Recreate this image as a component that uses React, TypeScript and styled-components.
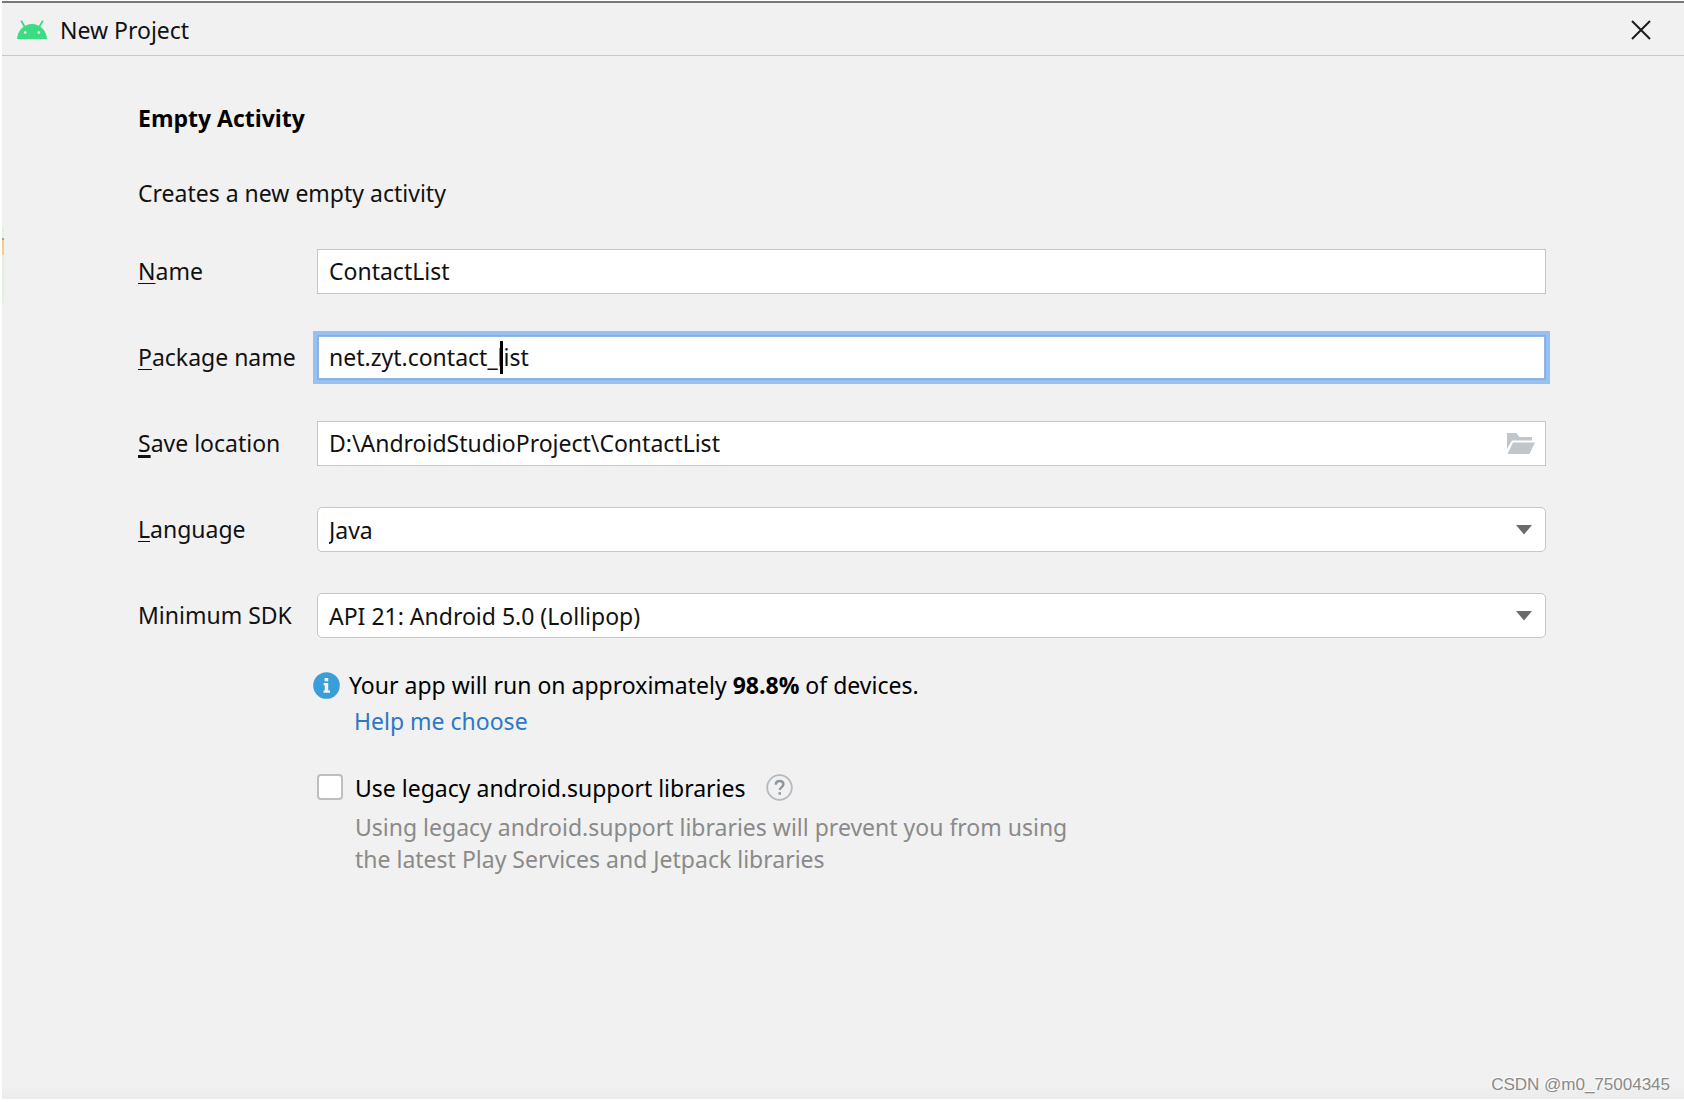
import React, { useState } from "react";
import styled, { createGlobalStyle } from "styled-components";

const GlobalStyle = createGlobalStyle`
  *, *::before, *::after { box-sizing: border-box; }
  body { margin: 0; background: #fff; }
  body, input, select, button {
    font-family: "Noto Sans", "Open Sans", sans-serif;
    font-size: 23px;
    line-height: 32px;
    color: #111;
  }
`;

const Dialog = styled.div`
  position: relative;
  display: flex;
  flex-direction: column;
  min-height: calc(100vh - 4px);
  margin: 1px 0 3px 2px;
  border-top: 2px solid #787878;
  background: linear-gradient(to top, #ebebeb, #f1f1f1 14px);
`;

const TitleBar = styled.header`
  display: flex;
  align-items: center;
  gap: 12px;
  height: 53px;
  padding: 1px 29px 0 14px;
  border-bottom: 1px solid #c8c8c8;
`;

const Title = styled.h1`
  flex: 1;
  margin: 0;
  font-size: 23px;
  font-weight: 400;
`;

const CloseButton = styled.button`
  display: flex;
  padding: 4px;
  border: 0;
  background: none;
`;

const Content = styled.main`
  display: flex;
  flex-direction: column;
  padding: 46px 138px 80px 136px;
`;

const Heading = styled.h2`
  margin: 0;
  font-family: "Open Sans", sans-serif;
  font-size: 23px;
  font-weight: 700;
  color: #000;
`;

const Description = styled.p`
  margin: 43px 0 0;
`;

const Form = styled.form`
  display: grid;
  grid-template-columns: 179px 1fr;
  row-gap: 41px;
  align-items: center;
  margin-top: 40px;
`;

const Label = styled.label`
  padding-bottom: 2px;
  white-space: nowrap;
`;

const Mnemonic = styled.span<{ $strong?: boolean }>`
  text-decoration: underline;
  text-decoration-thickness: ${(p) => (p.$strong ? 3 : 1)}px;
  text-underline-offset: 3px;
`;

const Field = styled.div<{ $focused?: boolean; $rounded?: boolean }>`
  position: relative;
  display: flex;
  align-items: center;
  height: 45px;
  border: 1px solid ${(p) => (p.$focused ? "#87afda" : "#c6c6c6")};
  border-radius: ${(p) => (p.$rounded ? 5 : 0)}px;
  background: #fff;
  box-shadow: ${(p) => (p.$focused ? "inset 0 0 0 1px #8fb8e8, 0 0 0 4px #97c1f0" : "none")};
`;

const TextInput = styled.input`
  flex: 1;
  min-width: 0;
  height: 100%;
  padding: 0 0 2px 11px;
  border: 0;
  outline: 0;
  background: none;
`;

const Caret = styled.span`
  position: absolute;
  top: 5px;
  left: 182px;
  width: 3px;
  height: 33px;
  background: #000;
`;

const BrowseButton = styled.button`
  display: flex;
  padding: 0 10px;
  border: 0;
  background: none;
`;

const Select = styled.select`
  flex: 1;
  height: 100%;
  padding: 0 40px 0 11px;
  border: 0;
  outline: 0;
  background: none;
  appearance: none;
`;

const ArrowIcon = styled.svg`
  position: absolute;
  right: 13px;
  pointer-events: none;
`;

const Notes = styled.section`
  display: flex;
  flex-direction: column;
  margin: 31px 0 0 175px;
`;

const InfoRow = styled.div`
  display: flex;
  align-items: center;
  gap: 9px;
  color: #000;
`;

const Percent = styled.b`
  font-family: "Open Sans", sans-serif;
`;

const HelpLink = styled.a`
  align-self: flex-start;
  margin: 4px 0 0 41px;
  color: #2c78c4;
  text-decoration: none;
`;

const LegacyRow = styled.div`
  display: flex;
  align-items: flex-start;
  margin: 35px 0 0 4px;
  color: #000;
`;

const CheckBox = styled.input`
  width: 26px;
  height: 26px;
  margin: 2px 12px 0 0;
  border: 2px solid #bebebe;
  border-radius: 4px;
  background: #fff;
  appearance: none;
  &:checked { background: #3a9fd9; }
`;

const HelpButton = styled.button`
  display: flex;
  margin: 2px 0 0 20px;
  padding: 0;
  border: 0;
  background: none;
`;

const Hint = styled.p`
  margin: 7px 0 0 42px;
  color: #8a8a8a;
`;

const EdgeStrip = styled.div`
  position: absolute;
  top: 225px;
  left: 0;
  width: 2px;
  height: 75px;
  background: linear-gradient(#e3f2dc 10px, #9aa58f 10px 12px, #f3cf85 12px 27px, #e0f2dc 27px);
`;

const Watermark = styled.footer`
  position: absolute;
  right: 14px;
  bottom: 4px;
  font-family: "Liberation Sans", sans-serif;
  font-size: 17px;
  line-height: 20px;
  color: #8a8a8a;
  text-shadow: -1px -1px 0 #fff;
`;

const AndroidLogo = () => (
  <svg width="32" height="20" viewBox="0 0 32 20" aria-hidden="true">
    <path d="M5.500 1.200 8.200 6M26.500 1.200 23.800 6" stroke="#3ddc84" strokeWidth="1.800" strokeLinecap="round" />
    <path d="M1 19C1.600 10.500 8 4 16 4s14.400 6.500 15 15Z" fill="#3ddc84" />
    <circle cx="9.200" cy="12.500" r="1.300" fill="#f1f1f1" />
    <circle cx="22.800" cy="12.500" r="1.300" fill="#f1f1f1" />
  </svg>
);

const CloseIcon = () => (
  <svg width="20" height="20" viewBox="0 0 20 20" aria-hidden="true">
    <path d="m1 1 18 18M19 1 1 19" stroke="#1c1c1c" strokeWidth="2" />
  </svg>
);

const FolderIcon = () => (
  <svg width="28" height="22" viewBox="0 0 28 22" aria-hidden="true">
    <path d="M0 0h9.500l2.500 4h13v3.500H5L0 16Z" fill="#c0c6ca" />
    <path d="M6 9.500h22L22.500 21H.5Z" fill="#c0c6ca" />
  </svg>
);

const Arrow = () => (
  <ArrowIcon width="16" height="10" viewBox="0 0 16 10" aria-hidden="true">
    <path d="M0 0h16L8 9.500Z" fill="#6b6b6b" />
  </ArrowIcon>
);

const InfoIcon = () => (
  <svg width="27" height="27" viewBox="0 0 27 27" aria-hidden="true">
    <circle cx="13.500" cy="13.500" r="13.300" fill="#3a9fd9" />
    <path d="M11.600 6h3.600v3.200h-3.600ZM10.600 11h4.600v7.500H17v2.200h-6.500v-2.200h1.300V13.200h-1.200Z" fill="#f4f4f4" />
  </svg>
);

const QuestionIcon = () => (
  <svg width="27" height="27" viewBox="0 0 27 27" aria-hidden="true">
    <circle cx="13.500" cy="13.500" r="12.300" fill="none" stroke="#b4babf" strokeWidth="1.800" />
    <path d="M9.800 10.700C9.800 8.400 11.400 7 13.600 7s3.800 1.300 3.800 3.300c0 2.700-3.600 2.900-3.600 5.700" fill="none" stroke="#8f979d" strokeWidth="2.400" />
    <path d="M12.500 18.200H15v2.500h-2.500Z" fill="#8f979d" />
  </svg>
);

export default function App() {
  const [name, setName] = useState("ContactList");
  const [pkg, setPkg] = useState("net.zyt.contact_list");
  const [location, setLocation] = useState("D:\\AndroidStudioProject\\ContactList");

  return (
    <>
      <GlobalStyle />
      <Dialog>
        <TitleBar>
          <AndroidLogo />
          <Title>New Project</Title>
          <CloseButton type="button" aria-label="Close"><CloseIcon /></CloseButton>
        </TitleBar>
        <Content>
          <Heading>Empty Activity</Heading>
          <Description>Creates a new empty activity</Description>
          <Form>
            <Label htmlFor="name"><Mnemonic>N</Mnemonic>ame</Label>
            <Field>
              <TextInput id="name" value={name} onChange={(e) => setName(e.target.value)} />
            </Field>
            <Label htmlFor="package"><Mnemonic>P</Mnemonic>ackage name</Label>
            <Field $focused>
              <TextInput id="package" value={pkg} onChange={(e) => setPkg(e.target.value)} />
              <Caret />
            </Field>
            <Label htmlFor="location"><Mnemonic $strong>S</Mnemonic>ave location</Label>
            <Field>
              <TextInput id="location" value={location} onChange={(e) => setLocation(e.target.value)} />
              <BrowseButton type="button" aria-label="Browse"><FolderIcon /></BrowseButton>
            </Field>
            <Label htmlFor="language"><Mnemonic>L</Mnemonic>anguage</Label>
            <Field $rounded>
              <Select id="language"><option>Java</option></Select>
              <Arrow />
            </Field>
            <Label htmlFor="sdk">Minimum SDK</Label>
            <Field $rounded>
              <Select id="sdk"><option>API 21: Android 5.0 (Lollipop)</option></Select>
              <Arrow />
            </Field>
          </Form>
          <Notes>
            <InfoRow>
              <InfoIcon />
              <span>Your app will run on approximately <Percent>98.8%</Percent> of devices.</span>
            </InfoRow>
            <HelpLink href="#help">Help me choose</HelpLink>
            <LegacyRow>
              <CheckBox type="checkbox" id="legacy" />
              <label htmlFor="legacy">Use legacy android.support libraries</label>
              <HelpButton type="button" aria-label="Help"><QuestionIcon /></HelpButton>
            </LegacyRow>
            <Hint>
              Using legacy android.support libraries will prevent you from using<br />
              the latest Play Services and Jetpack libraries
            </Hint>
          </Notes>
        </Content>
        <EdgeStrip />
        <Watermark>CSDN @m0_75004345</Watermark>
      </Dialog>
    </>
  );
}
